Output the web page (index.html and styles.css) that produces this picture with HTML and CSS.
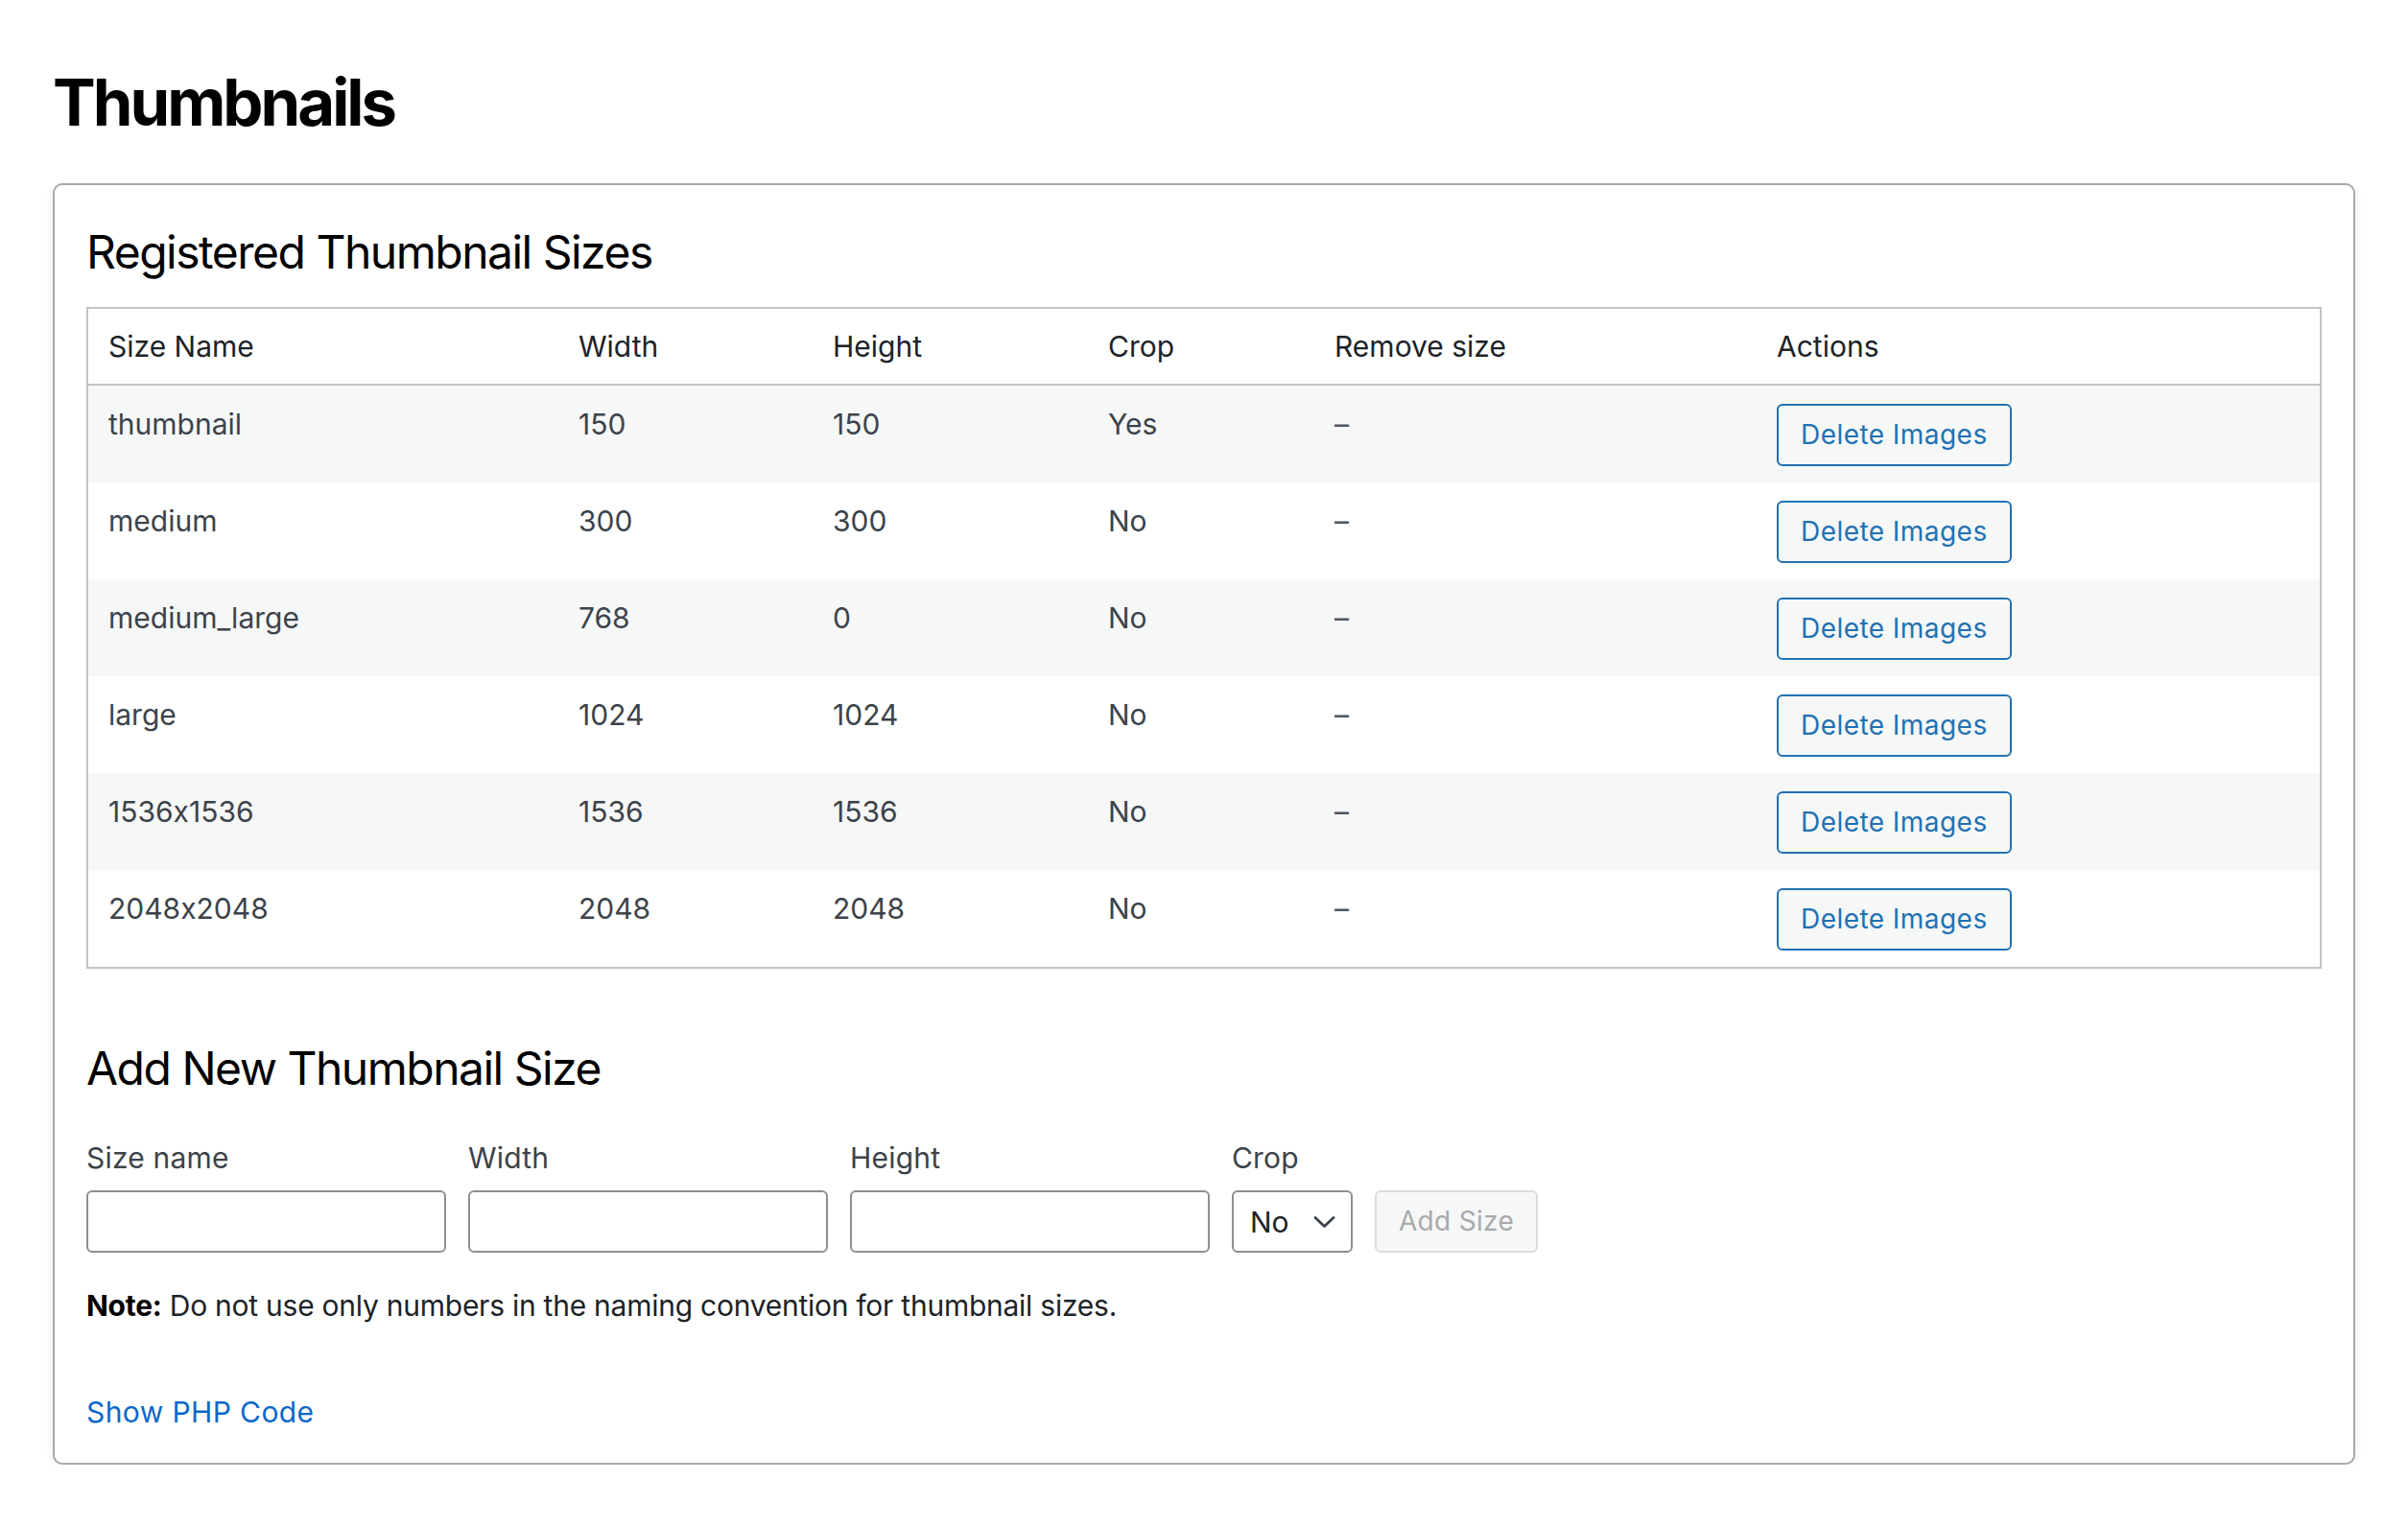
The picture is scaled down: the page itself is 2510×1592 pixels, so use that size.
FILE: index.html
```html
<!DOCTYPE html>
<html lang="en">
<head>
<meta charset="utf-8">
<title>Thumbnails</title>
<link rel="stylesheet" href="styles.css">
</head>
<body>
<div class="wrap">
  <h1 class="page-title">Thumbnails</h1>
  <section class="card">
    <h2 class="section-title">Registered Thumbnail Sizes</h2>
    <table class="sizes">
      <thead>
        <tr>
          <th class="c-name">Size Name</th>
          <th class="c-width">Width</th>
          <th class="c-height">Height</th>
          <th class="c-crop">Crop</th>
          <th class="c-remove">Remove size</th>
          <th class="c-actions">Actions</th>
        </tr>
      </thead>
      <tbody>
        <tr><td>thumbnail</td><td>150</td><td>150</td><td>Yes</td><td class="dash">–</td><td><button class="btn-outline" type="button">Delete Images</button></td></tr>
        <tr><td>medium</td><td>300</td><td>300</td><td>No</td><td class="dash">–</td><td><button class="btn-outline" type="button">Delete Images</button></td></tr>
        <tr><td>medium_large</td><td>768</td><td>0</td><td>No</td><td class="dash">–</td><td><button class="btn-outline" type="button">Delete Images</button></td></tr>
        <tr><td>large</td><td>1024</td><td>1024</td><td>No</td><td class="dash">–</td><td><button class="btn-outline" type="button">Delete Images</button></td></tr>
        <tr><td>1536x1536</td><td>1536</td><td>1536</td><td>No</td><td class="dash">–</td><td><button class="btn-outline" type="button">Delete Images</button></td></tr>
        <tr><td>2048x2048</td><td>2048</td><td>2048</td><td>No</td><td class="dash">–</td><td><button class="btn-outline" type="button">Delete Images</button></td></tr>
      </tbody>
    </table>

    <h2 class="section-title add-title">Add New Thumbnail Size</h2>
    <form class="add-form">
      <div class="field">
        <label class="field-label" for="f-name">Size name</label>
        <input class="text-input" id="f-name" type="text">
      </div>
      <div class="field">
        <label class="field-label" for="f-width">Width</label>
        <input class="text-input" id="f-width" type="text">
      </div>
      <div class="field">
        <label class="field-label" for="f-height">Height</label>
        <input class="text-input" id="f-height" type="text">
      </div>
      <div class="field">
        <span class="field-label">Crop</span>
        <div class="select-box">
          <span class="select-value">No</span>
          <svg class="chevron" width="23" height="14" viewBox="0 0 23 14" aria-hidden="true"><path d="M2 2.5 L11.5 11.5 L21 2.5" fill="none" stroke="#3c434a" stroke-width="2.8" stroke-linecap="round" stroke-linejoin="round"/></svg>
        </div>
      </div>
      <div class="field">
        <button class="btn-disabled" type="button" disabled>Add Size</button>
      </div>
    </form>
    <p class="note"><strong>Note:</strong> Do not use only numbers in the naming convention for thumbnail sizes.</p>
    <a class="php-link" href="#">Show PHP Code</a>
  </section>
</div>
</body>
</html>
```
FILE: styles.css
```css
* { box-sizing: border-box; }

body {
  margin: 0;
  background: #ffffff;
  font-family: Inter, "Noto Sans", sans-serif;
  font-feature-settings: "calt" 0;
  color: #1d2327;
}

.wrap {
  padding: 67px 55px 0;
}

.page-title {
  margin: 0;
  font-size: 67px;
  line-height: 80px;
  font-weight: 700;
  letter-spacing: -3px;
  color: #000000;
}

.card {
  margin-top: 44px;
  border: 2px solid #a7aaad;
  border-radius: 10px;
  padding: 40px 33px 32px;
  background: #ffffff;
  box-shadow: 0 3px 10px rgba(0, 0, 0, 0.07);
}

.section-title {
  margin: 0;
  font-size: 48px;
  line-height: 60px;
  font-weight: 400;
  letter-spacing: -1.5px;
  color: #000000;
}

.sizes {
  margin-top: 27px;
  width: 100%;
  border-collapse: separate;
  border-spacing: 0;
  table-layout: fixed;
  border: 2px solid #c3c4c7;
}

.c-name { width: 490px; }
.c-width { width: 265px; }
.c-height { width: 287px; }
.c-crop { width: 236px; }
.c-remove { width: 461px; }

.sizes th {
  padding: 18px 21px;
  font-size: 30px;
  line-height: 42px;
  font-weight: 400;
  text-align: left;
  color: #1d2327;
  border-bottom: 2px solid #c3c4c7;
}

.sizes td {
  padding: 19px 21px 17px;
  font-size: 30px;
  line-height: 42px;
  vertical-align: top;
  color: #3c434a;
}

.sizes tbody tr:nth-child(odd) td {
  background: #f6f7f7;
}

.sizes td.dash {
  color: #50575e;
}

.btn-outline {
  display: block;
  width: fit-content;
  height: 65px;
  padding: 0 23px;
  border: 2px solid #2271b1;
  border-radius: 6px;
  background: #f6f7f7;
  color: #2271b1;
  font-family: Inter, "Noto Sans", sans-serif;
  font-size: 28px;
  line-height: 61px;
  letter-spacing: 0.45px;
  cursor: pointer;
}

.add-title {
  margin-top: 74px;
}

.add-form {
  margin-top: 42px;
  display: flex;
  align-items: flex-end;
  gap: 23px;
}

.field {
  display: flex;
  flex-direction: column;
}

.field-label {
  display: block;
  font-size: 30px;
  line-height: 42px;
  color: #3c434a;
  margin-bottom: 13px;
  letter-spacing: 0.2px;
}

.text-input {
  width: 375px;
  height: 65px;
  border: 2px solid #8c8f94;
  border-radius: 6px;
  background: #ffffff;
  font-family: Inter, "Noto Sans", sans-serif;
  font-size: 30px;
  padding: 0 16px;
}

.select-box {
  width: 126px;
  height: 65px;
  border: 2px solid #8c8f94;
  border-radius: 6px;
  background: #ffffff;
  display: flex;
  align-items: center;
  padding: 0 16px 0 17px;
}

.select-value {
  font-size: 30px;
  line-height: 42px;
  color: #1d2327;
}

.chevron {
  margin-left: auto;
  display: block;
}

.btn-disabled {
  height: 65px;
  padding: 0 23px;
  border: 2px solid #dcdcde;
  border-radius: 6px;
  background: #f6f7f7;
  color: #a7aaad;
  font-family: Inter, "Noto Sans", sans-serif;
  font-size: 28px;
  line-height: 61px;
  letter-spacing: 0.3px;
}

.note {
  margin: 34px 0 0;
  font-size: 30px;
  line-height: 42px;
  letter-spacing: -0.25px;
  color: #1d2327;
}

.note strong {
  font-weight: 700;
  color: #000000;
}

.php-link {
  display: block;
  width: fit-content;
  margin-top: 69px;
  font-size: 30px;
  line-height: 42px;
  letter-spacing: 0.4px;
  color: #0a68c9;
  text-decoration: none;
}
```
